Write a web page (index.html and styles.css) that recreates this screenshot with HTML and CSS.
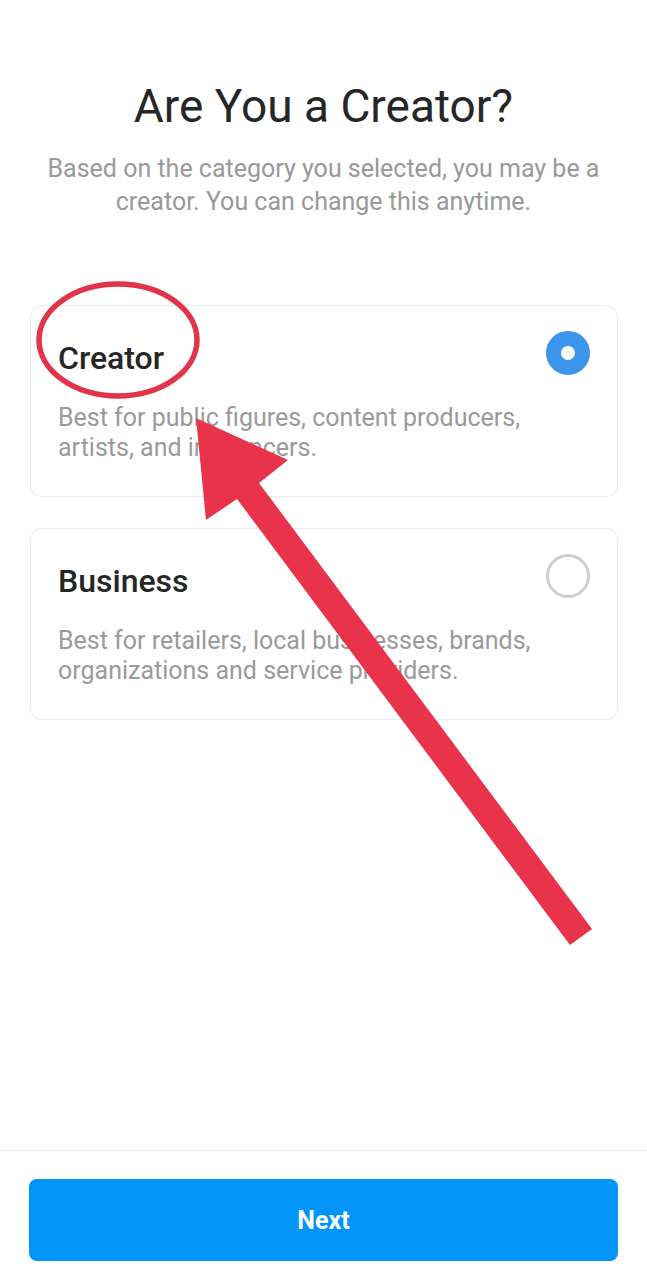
FILE: index.html
```html
<!DOCTYPE html>
<html lang="en">
<head>
<meta charset="utf-8">
<title>Are You a Creator?</title>
<link rel="stylesheet" href="styles.css">
</head>
<body>
<div class="page">
  <main class="content">
    <header class="intro">
      <h1 class="title">Are You a Creator?</h1>
      <p class="subtitle">Based on the category you selected, you may be a creator. You can change this anytime.</p>
    </header>
    <div class="options">
      <div class="card">
        <div class="card-head">
          <span class="card-title">Creator</span>
          <span class="radio radio-on"></span>
        </div>
        <p class="card-desc">Best for public figures, content producers, artists, and influencers.</p>
      </div>
      <div class="card">
        <div class="card-head">
          <span class="card-title">Business</span>
          <span class="radio"></span>
        </div>
        <p class="card-desc">Best for retailers, local businesses, brands, organizations and service providers.</p>
      </div>
    </div>
  </main>
  <footer class="footer">
    <button class="next-btn">Next</button>
  </footer>
  <svg class="annotation" width="647" height="1280" viewBox="0 0 647 1280" aria-hidden="true">
    <ellipse cx="118" cy="340" rx="79" ry="56" fill="none" stroke="#e2334a" stroke-width="5.5"/>
    <polygon points="196,418 288,460 259,483 592,929 570,945 237,499 206,520" fill="#e8334a"/>
  </svg>
</div>
</body>
</html>
```

FILE: styles.css
```css
* { box-sizing: border-box; }
html, body { margin: 0; padding: 0; background: #fff; }
body {
  font-family: Roboto, "Liberation Sans", Arial, sans-serif;
  color: #262626;
}
.page {
  position: relative;
  width: 647px;
  min-height: 1280px;
  display: flex;
  flex-direction: column;
}
.content { flex: 1; }
.intro {
  padding: 79px 30px 0;
  text-align: center;
}
.title {
  margin: 0;
  font-size: 46px;
  line-height: 54px;
  font-weight: 400;
  color: #262626;
}
.subtitle {
  margin: 19px 0 0;
  font-size: 25px;
  line-height: 33px;
  color: #999;
}
.options {
  margin: 87px 29px 0 30px;
  display: flex;
  flex-direction: column;
  gap: 31px;
}
.card {
  border: 1px solid #ebebeb;
  border-radius: 12px;
  padding: 28px 27px 33px 27px;
}
.card-head {
  display: flex;
  align-items: flex-start;
  justify-content: space-between;
  height: 48px;
}
.card-title {
  font-size: 32px;
  font-weight: 500;
  color: #262626;
  line-height: 48px;
}
.radio {
  width: 44px;
  height: 44px;
  margin-top: -3px;
  border-radius: 50%;
  border: 3px solid #cfcfcf;
  flex: none;
}
.radio-on {
  border: 15px solid #3d95ec;
  background: #fff;
}
.card-desc {
  margin: 21px 0 0;
  max-width: 495px;
  font-size: 25px;
  line-height: 30px;
  color: #9a9a9a;
}
.footer {
  border-top: 1px solid #efefef;
  padding: 28px 29px 19px;
}
.next-btn {
  display: block;
  width: 100%;
  height: 82px;
  border: none;
  border-radius: 8px;
  background: #0095f6;
  color: #fff;
  font-family: Roboto, "Liberation Sans", Arial, sans-serif;
  font-size: 25px;
  font-weight: 700;
}
.annotation {
  position: absolute;
  left: 0;
  top: 0;
  pointer-events: none;
}
```
